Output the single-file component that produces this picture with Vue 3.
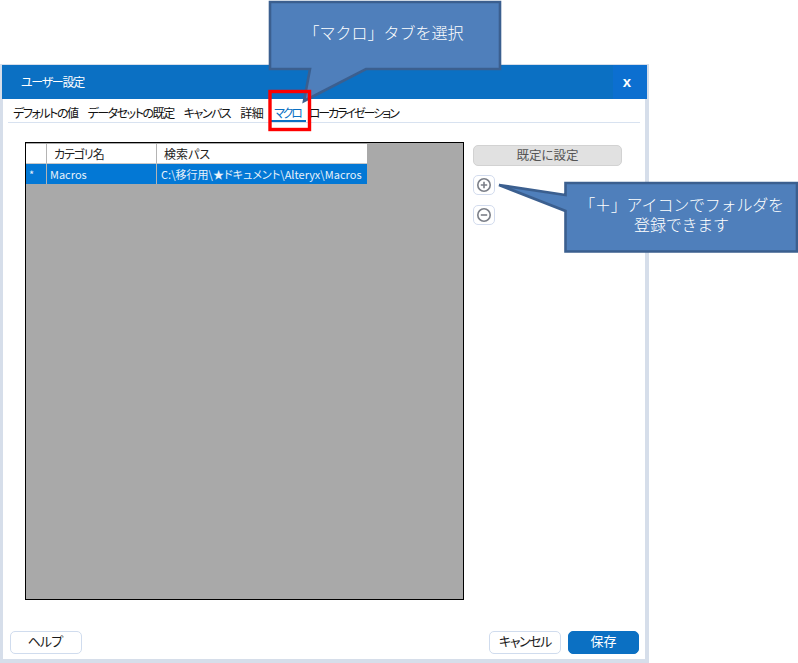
<script setup>
const tabs = [
  { label: 'デフォルトの値', fit: 'kana' },
  { label: 'データセットの既定', fit: 'kana' },
  { label: 'キャンバス', fit: 'kana' },
  { label: '詳細', fit: 'kanji' },
  { label: 'マクロ', fit: 'macro', active: true },
  { label: 'ローカライゼーション', fit: 'tight' },
]
</script>

<template>
  <div class="page">
    <div class="dialog">
      <header class="titlebar">
        <span class="title">ユーザー設定</span>
        <span class="close">x</span>
      </header>
      <nav class="tabs">
        <span v-for="t in tabs" :key="t.label" class="tab" :class="[t.fit, { active: t.active }]">{{ t.label }}</span>
      </nav>
      <main class="content">
        <section class="grid-area">
          <div class="grid">
            <div class="cell head c0"></div>
            <div class="cell head c1">カテゴリ名</div>
            <div class="cell head c2">検索パス</div>
            <div class="cell sel c0">*</div>
            <div class="cell sel c1 name">Macros</div>
            <div class="cell sel c2 path">C:\移行用\★ドキュメント\Alteryx\Macros</div>
          </div>
        </section>
        <aside class="side">
          <button class="default-btn">既定に設定</button>
          <button class="icon-btn" aria-label="追加">
            <svg width="16" height="16" viewBox="0 0 16 16"><circle cx="8" cy="8" r="6.2" fill="none" stroke="#7b7f88" stroke-width="1.6"/><path d="M4.8 8h6.4M8 4.8v6.4" stroke="#7b7f88" stroke-width="1.6"/></svg>
          </button>
          <button class="icon-btn" aria-label="削除">
            <svg width="16" height="16" viewBox="0 0 16 16"><circle cx="8" cy="8" r="6.2" fill="none" stroke="#7b7f88" stroke-width="1.6"/><path d="M4.8 8h6.4" stroke="#7b7f88" stroke-width="1.6"/></svg>
          </button>
        </aside>
      </main>
      <footer class="footer">
        <button class="btn help">ヘルプ</button>
        <div class="footer-right">
          <button class="btn cancel">キャンセル</button>
          <button class="btn primary">保存</button>
        </div>
      </footer>
    </div>

    <svg class="callout-shape" width="798" height="663" viewBox="0 0 798 663">
      <path d="M270 2H500V69H366L304 101L310 69H270Z" fill="#4f7fbb" stroke="#3b5f8f" stroke-width="2.6"/>
      <rect x="270" y="91.5" width="39.5" height="38" fill="none" stroke="#fe0000" stroke-width="3.4"/>
      <path d="M565.5 183H797V251.5H565.5V211L499 185L565.5 195Z" fill="#4f7fbb" stroke="#3b5f8f" stroke-width="2.6"/>
    </svg>
    <div class="callout-text top">「マクロ」タブを選択</div>
    <div class="callout-text bottom">「＋」アイコンでフォルダを<br>登録できます</div>
  </div>
</template>

<style>
html, body { margin: 0; padding: 0; background: #fff; }
</style>

<style scoped>
.page {
  position: relative;
  width: 798px;
  height: 663px;
  overflow: hidden;
  background: #fff;
  font-family: "Noto Sans CJK JP", "Noto Sans", sans-serif;
  font-feature-settings: "palt";
  padding-top: 64px;
  box-sizing: border-box;
}
.dialog {
  width: 649px;
  height: 599px;
  box-sizing: border-box;
  border: 3px solid #d6deea;
  border-top-width: 1px;
  border-right-width: 4px;
  border-bottom-width: 4px;
  background: #fff;
  display: flex;
  flex-direction: column;
}
.titlebar {
  height: 34px;
  margin-left: -1px;
  margin-right: -2px;
  background: #0b70c3;
  color: #fff;
  display: flex;
  align-items: center;
  justify-content: space-between;
  flex: none;
}
.title { margin-left: 19px; font-size: 12px; line-height: 34px; letter-spacing: -1.3px; }
.close {
  width: 34px;
  height: 34px;
  box-sizing: border-box;
  padding-right: 6px;
  background: #0c6fd0;
  text-align: center;
  font: bold 15px/34px "Liberation Sans", sans-serif;
}
.tabs {
  flex: none;
  display: flex;
  gap: 10px;
  height: 23px;
  margin: 0 5px;
  padding-left: 5px;
  border-bottom: 1px solid #d8e2f0;
  font-size: 12px;
  color: #111;
}
.tab {
  position: relative;
  line-height: 28px;
  white-space: nowrap;
}
.tab.kana { letter-spacing: -1.45px; }
.tab.kanji { letter-spacing: -0.6px; }
.tab.macro { letter-spacing: -2.2px; margin-left: 1px; margin-right: -2px; }
.tab.tight { letter-spacing: -2.05px; }
.tab.active { color: #0b70c3; }
.tab.active::after {
  content: "";
  position: absolute;
  left: -4px;
  right: -5px;
  bottom: 0;
  height: 2px;
  background: #0b70c3;
}
.content {
  flex: 1;
  min-height: 0;
  display: flex;
  gap: 9px;
  padding: 19px 0 0 22px;
}
.grid-area {
  width: 439px;
  height: 458px;
  box-sizing: border-box;
  border: 1px solid #000;
  background: #a9a9a9;
  padding-top: 1px;
}
.grid {
  display: grid;
  grid-template-columns: 21px 110px 210px;
  grid-template-rows: 20px 20px;
  width: 341px;
}
.cell {
  box-sizing: border-box;
  white-space: nowrap;
  overflow: hidden;
  border-right: 1px solid #b4b4b4;
}
.head {
  background: #fff;
  font-size: 12px;
  line-height: 19px;
  color: #222;
  border-bottom: 1px solid #c8c8c8;
}
.head.c1 { padding-left: 7px; letter-spacing: -1.1px; }
.head.c2 { padding-left: 7px; border-right: none; }
.sel {
  background: #0378d5;
  color: #e8f2fb;
  font-size: 11px;
  line-height: 20px;
}
.sel.c0 { padding-left: 3px; }
.sel.name { padding-left: 3px; }
.sel.path { padding-left: 4px; border-right: none; letter-spacing: 0.03px; }
.side {
  display: flex;
  flex-direction: column;
  align-items: flex-start;
  padding-top: 3px;
}
.default-btn {
  width: 149px;
  height: 21px;
  padding: 0 0 2px;
  border: 1px solid #d2d2d2;
  border-radius: 5px;
  background: #e1e1e1;
  color: #555;
  font: inherit;
  font-size: 12.5px;
  line-height: 17px;
}
.icon-btn {
  width: 22px;
  height: 20px;
  margin-top: 9px;
  padding: 0;
  border: 1px solid #d3dcee;
  border-radius: 5px;
  background: #fff;
  display: flex;
  align-items: center;
  justify-content: center;
}
.icon-btn + .icon-btn { margin-top: 10px; }
.footer {
  flex: none;
  display: flex;
  justify-content: space-between;
  padding: 0 6px 5px 7px;
}
.footer-right { display: flex; gap: 7px; }
.btn {
  width: 72px;
  height: 23px;
  padding: 0 0 3px;
  border: 1px solid #d0dcee;
  border-radius: 5px;
  background: #fff;
  color: #1a1a1a;
  font: inherit;
  font-size: 13px;
  line-height: 18px;
  letter-spacing: -0.6px;
}
.btn.help { letter-spacing: -0.9px; padding-right: 2px; }
.btn.cancel { letter-spacing: -1.4px; }
.btn.primary {
  width: 71px;
  background: #0b70c3;
  border-color: #0b70c3;
  color: #fff;
  letter-spacing: 0;
}
.callout-shape { position: absolute; left: 0; top: 0; pointer-events: none; }
.callout-text {
  position: absolute;
  color: #fff;
  font-size: 16px;
  font-weight: 300;
  line-height: 20px;
  text-align: center;
  font-feature-settings: normal;
}
.callout-text.top { left: 268px; top: 22px; width: 231px; }
.callout-text.bottom { left: 566px; top: 194px; width: 231px; letter-spacing: -0.2px; }
</style>
